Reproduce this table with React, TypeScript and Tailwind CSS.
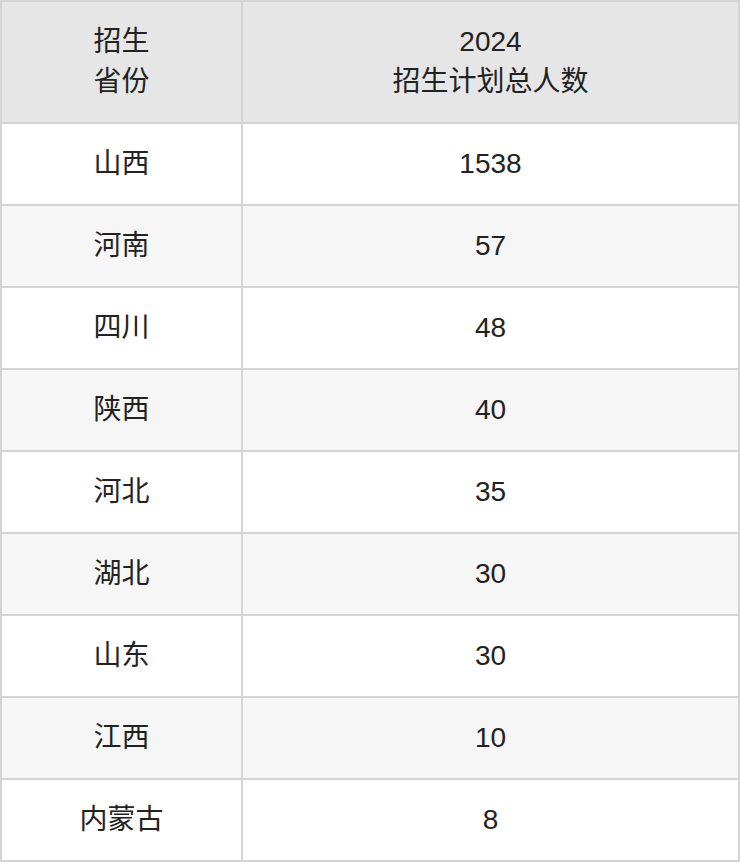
import React from 'react';

const ROWS: [string, string][] = [
  ['山西', '1538'],
  ['河南', '57'],
  ['四川', '48'],
  ['陕西', '40'],
  ['河北', '35'],
  ['湖北', '30'],
  ['山东', '30'],
  ['江西', '10'],
  ['内蒙古', '8'],
];

const App: React.FC = () => {
  return (
    <div
      className="w-[740px] border-2 border-[#d4d4d4] text-[28px] leading-[40px] text-[#222]"
      style={{ fontFamily: '"Liberation Sans", "Noto Sans CJK SC", sans-serif' }}
    >
      <div className="grid grid-cols-[241px_1fr] bg-[#e6e6e6] border-b-2 border-[#d4d4d4]">
        <div className="h-[120px] flex flex-col items-center justify-center border-r-2 border-[#d4d4d4]">
          <span>招生</span>
          <span>省份</span>
        </div>
        <div className="h-[120px] flex flex-col items-center justify-center">
          <span>2024</span>
          <span>招生计划总人数</span>
        </div>
      </div>
      {ROWS.map(([prov, num], i) => (
        <div
          key={i}
          className={`grid grid-cols-[241px_1fr] ${i % 2 === 1 ? 'bg-[#f6f6f6]' : 'bg-white'} ${
            i < ROWS.length - 1 ? 'border-b-2 border-[#d4d4d4]' : ''
          }`}
        >
          <div className="h-[80px] flex items-center justify-center border-r-2 border-[#d4d4d4]">{prov}</div>
          <div className="h-[80px] flex items-center justify-center">{num}</div>
        </div>
      ))}
    </div>
  );
};

export default App;
